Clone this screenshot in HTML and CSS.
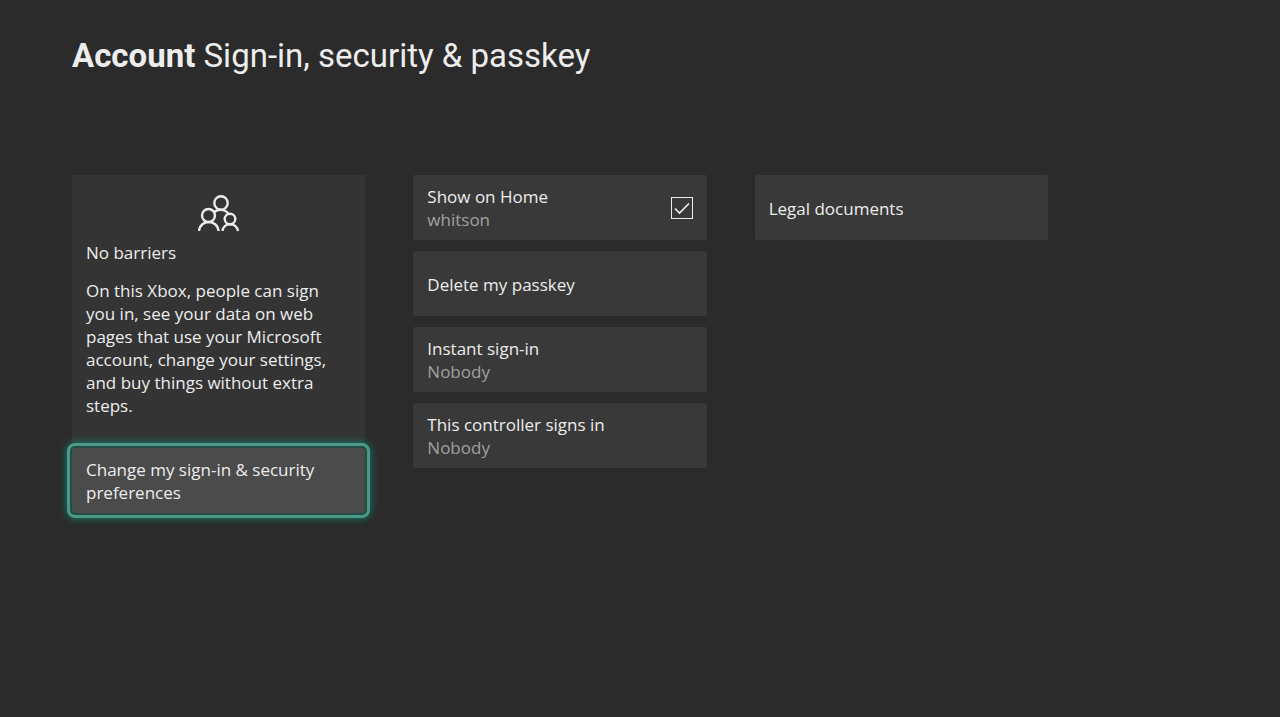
FILE: index.html
```html
<!DOCTYPE html>
<html lang="en">
<head>
    <meta charset="UTF-8">
    <meta name="viewport" content="width=device-width, initial-scale=1.0">
    <title>Sign-in, security &amp; passkey</title>
    <link rel="stylesheet" href="styles.css">
</head>
<body>
    <main class="page">
        <h1 class="title"><strong>Account</strong> Sign-in, security &amp; passkey</h1>

        <div class="columns">
            <section class="column-main">
                <div class="info-card">
                    <svg class="people-icon" width="42" height="38" viewBox="0 0 42 38" fill="none" stroke="currentColor" stroke-width="2.4" aria-hidden="true">
                        <circle cx="23" cy="8" r="6.7"/>
                        <circle cx="10.5" cy="20.5" r="6.5"/>
                        <circle cx="32" cy="24" r="5.3"/>
                        <path d="M16 17.5c3.5-3.6 11-4 14.5 1.5"/>
                        <path d="M1 36c1-12 18.500-12 19.500 0"/>
                        <path d="M24.500 36c.8-9 14.200-9 15.500 0"/>
                    </svg>
                    <h2 class="info-title">No barriers</h2>
                    <p class="info-text">On this Xbox, people can sign you in, see your data on web pages that use your Microsoft account, change your settings, and buy things without extra steps.</p>
                </div>
                <button class="tile focused" type="button">Change my sign-in &amp; security preferences</button>
            </section>

            <section class="column">
                <label class="tile" for="showOnHome">
                    <span class="tile-text">Show on Home <span class="tile-sub">whitson</span></span>
                    <span class="check">
                        <input type="checkbox" id="showOnHome" checked>
                        <svg class="check-mark" width="22" height="22" viewBox="0 0 22 22" fill="none" stroke="currentColor" stroke-width="1.6" aria-hidden="true">
                            <path d="M4 11.500l4.500 4.500L18 6.500"/>
                        </svg>
                    </span>
                </label>
                <button class="tile" type="button">Delete my passkey</button>
                <button class="tile" type="button">
                    <span class="tile-text">Instant sign-in <span class="tile-sub">Nobody</span></span>
                </button>
                <button class="tile" type="button">
                    <span class="tile-text">This controller signs in <span class="tile-sub">Nobody</span></span>
                </button>
            </section>

            <section class="column">
                <button class="tile" type="button">Legal documents</button>
            </section>
        </div>
    </main>
</body>
</html>
```
FILE: styles.css
```css
* {
    box-sizing: border-box;
}

body {
    margin: 0;
    background: #2b2b2b;
    color: #ededed;
    font-family: 'Segoe UI', 'Open Sans', sans-serif;
    font-size: 17px;
    line-height: 23px;
}

.page {
    padding: 36px 72px;
}

.title {
    margin: 0 0 99px;
    font-family: Bahnschrift, Roboto, sans-serif;
    font-size: 33px;
    font-weight: 400;
    line-height: 40px;
}

.title strong {
    font-weight: 700;
}

.columns {
    display: grid;
    grid-template-columns: repeat(3, 1fr);
    gap: 48px;
    align-items: start;
    max-width: 976px;
}

.column {
    display: flex;
    flex-direction: column;
    gap: 11px;
}

.column-main {
    display: flex;
    flex-direction: column;
    background: #343434;
}

.info-card {
    padding: 20px 32px 31px 14px;
}

.people-icon {
    display: block;
    margin: 0 auto;
    transform: translateX(9px);
}

.info-title {
    margin: 8px 0 15px;
    font-size: 17px;
    font-weight: 400;
}

.info-text {
    margin: 0;
}

.tile {
    display: flex;
    align-items: center;
    justify-content: space-between;
    width: 100%;
    min-height: 65px;
    padding: 10px 14px 9px;
    border: none;
    border-radius: 2px;
    background: #393939;
    color: inherit;
    font: inherit;
    text-align: left;
    cursor: pointer;
}

.tile:hover {
    background: #434343;
}

.tile.focused {
    background: #4b4b4b;
    outline: 3px solid #4b9886;
    outline-offset: 2px;
    border-radius: 3px;
    box-shadow: 0 0 0 3px #224d44, 0 0 9px 5px #12806a;
}

.tile-sub {
    display: block;
    color: #a0a0a0;
}

.check {
    display: grid;
}

.check input,
.check-mark {
    grid-area: 1 / 1;
}

.check input {
    appearance: none;
    width: 22px;
    height: 22px;
    margin: 0;
    border: 1px solid #ededed;
}

.check-mark {
    visibility: hidden;
    pointer-events: none;
}

.check input:checked + .check-mark {
    visibility: visible;
}
```
